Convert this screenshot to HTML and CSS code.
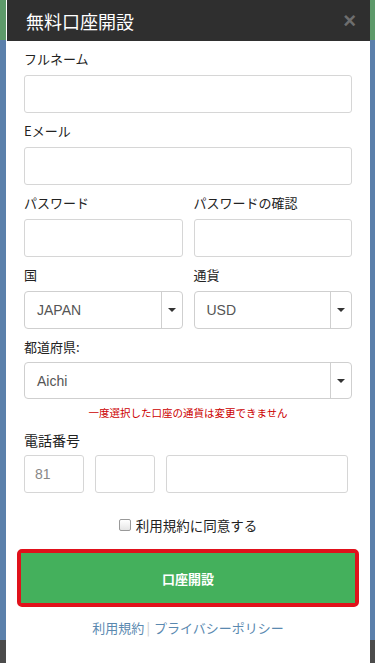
FILE: index.html
```html
<!DOCTYPE html>
<html lang="ja">
<head>
<meta charset="utf-8">
<title>無料口座開設</title>
<link rel="stylesheet" href="styles.css">
</head>
<body>
<div class="modal">
  <div class="modal-header">
    <h1 class="title">無料口座開設</h1>
    <span class="close">×</span>
  </div>
  <form class="modal-body">
    <label class="label">フルネーム</label>
    <div class="input"></div>

    <label class="label">Eメール</label>
    <div class="input"></div>

    <div class="row">
      <div class="col">
        <label class="label">パスワード</label>
        <div class="input"></div>
      </div>
      <div class="col">
        <label class="label">パスワードの確認</label>
        <div class="input"></div>
      </div>
    </div>

    <div class="row">
      <div class="col">
        <label class="label">国</label>
        <div class="select"><span class="select-value">JAPAN</span><span class="select-arrow"><i class="caret"></i></span></div>
      </div>
      <div class="col">
        <label class="label">通貨</label>
        <div class="select"><span class="select-value usd">USD</span><span class="select-arrow"><i class="caret"></i></span></div>
      </div>
    </div>

    <label class="label">都道府県:</label>
    <div class="select last"><span class="select-value">Aichi</span><span class="select-arrow"><i class="caret"></i></span></div>

    <p class="note">一度選択した口座の通貨は変更できません</p>

    <label class="label phone-label">電話番号</label>
    <div class="phone-row">
      <div class="input phone-code">81</div>
      <div class="input phone-area"></div>
      <div class="input phone-num"></div>
    </div>

    <div class="agree"><span class="checkbox"></span><span>利用規約に同意する</span></div>

    <div class="btn-wrap"><div class="btn">口座開設</div></div>

    <div class="links"><span>利用規約</span><span class="sep">|</span><span>プライバシーポリシー</span></div>
  </form>
</div>
</body>
</html>
```

FILE: styles.css
```css
html, body {
  margin: 0;
  padding: 0;
}
body {
  width: 375px;
  height: 663px;
  overflow: hidden;
  background: linear-gradient(to bottom, #5d9a6a 0, #5d9a6a 40px, #5b80ab 40px, #5b80ab 640px, #4b4b4b 640px);
  font-family: "Noto Sans CJK JP", "Liberation Sans", sans-serif;
  color: #222;
}
.modal {
  margin-left: 6px;
  width: 364px;
  height: 663px;
  background: #fff;
}
.modal-header {
  height: 41px;
  background: #2f2f2f;
  display: flex;
  align-items: center;
  justify-content: space-between;
  padding: 0 14px 0 19px;
  margin-left: 1px;
}
.title {
  margin: 0;
  font-size: 18px;
  font-weight: normal;
  color: #fff;
  line-height: 24px;
}
.close {
  color: #6e6e6e;
  font-family: "Liberation Sans", sans-serif;
  font-size: 22px;
  font-weight: bold;
  line-height: 22px;
}
.modal-body {
  padding: 8px 18px 0 18px;
  display: flex;
  flex-direction: column;
}
.label {
  display: block;
  font-size: 13px;
  line-height: 20px;
  height: 20px;
  margin-bottom: 6px;
  color: #222;
}
.input {
  height: 36px;
  border: 1px solid #d6d6d6;
  border-radius: 3px;
  margin-bottom: 8px;
  box-sizing: content-box;
  background: #fff;
}
.row {
  display: flex;
  gap: 11px;
}
.col {
  flex: 1;
  display: flex;
  flex-direction: column;
}
.select {
  height: 36px;
  border: 1px solid #cfcfcf;
  border-radius: 4px;
  margin-bottom: 8px;
  display: flex;
  align-items: center;
}
.select.last {
  margin-top: -1px;
  height: 35px;
  margin-bottom: 0;
}
.select-value {
  flex: 1;
  padding-left: 12px;
  font-family: "Liberation Sans", sans-serif;
  font-size: 14px;
  color: #555;
}
.select-arrow {
  width: 20px;
  height: 100%;
  border-left: 1px solid #cfcfcf;
  display: flex;
  align-items: center;
  justify-content: center;
}
.caret {
  width: 0;
  height: 0;
  border-left: 4px solid transparent;
  border-right: 4px solid transparent;
  border-top: 4px solid #333;
}
.note {
  margin: 7px 0 0;
  text-align: center;
  font-size: 10.5px;
  line-height: 14px;
  color: #c00;
}
.phone-label {
  margin-top: 9px;
  font-size: 14px;
  line-height: 22px;
  height: 22px;
  margin-bottom: 4px;
}
.phone-row {
  display: flex;
  gap: 11px;
  padding-right: 4px;
}
.phone-code {
  width: 58px;
  display: flex;
  align-items: center;
  font-family: "Liberation Sans", sans-serif;
  font-size: 14px;
  color: #888;
  text-indent: 10px;
}
.phone-area {
  width: 58px;
}
.phone-num {
  flex: 1;
}
.agree {
  margin-top: 14px;
  display: flex;
  justify-content: center;
  align-items: center;
  gap: 5px;
  font-size: 13.5px;
  line-height: 20px;
  color: #222;
}
.checkbox {
  width: 10px;
  height: 10px;
  border: 1px solid #999;
  border-radius: 2px;
  background: linear-gradient(#fff, #e5e5e5);
}
.btn-wrap {
  margin: 14px -7px 0 -7px;
  border: 4px solid #e0111b;
  border-radius: 5px;
}
.btn {
  height: 50px;
  background: #44b05c;
  color: #fff;
  font-weight: bold;
  font-size: 13px;
  display: flex;
  align-items: center;
  justify-content: center;
}
.links {
  margin-top: 11px;
  display: flex;
  justify-content: center;
  align-items: center;
  font-size: 13px;
  line-height: 20px;
  color: #5a89b0;
}
.sep {
  color: #ccc;
  margin: 0 4px 0 2px;
}
```
